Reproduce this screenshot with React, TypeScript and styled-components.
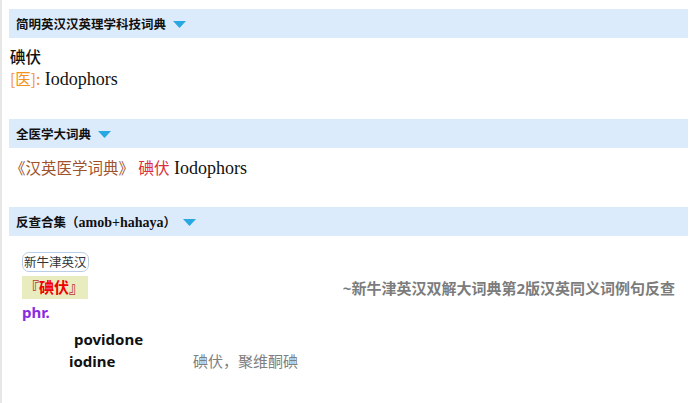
import React from 'react';
import styled, { createGlobalStyle } from 'styled-components';

const GlobalStyle = createGlobalStyle`
  html, body {
    margin: 0;
    padding: 0;
    background: #fff;
  }
  body {
    font-family: 'Liberation Serif', 'Noto Sans CJK SC', serif;
  }
`;

const Page = styled.div`
  min-height: 403px;
  box-sizing: border-box;
  border-left: 2px solid #e6e6e6;
  padding: 9px 2px 0 7px;
`;

const Section = styled.section<{ $gap: number }>`
  margin-bottom: ${p => p.$gap}px;
`;

const Header = styled.div`
  display: flex;
  align-items: center;
  gap: 7px;
  height: 29px;
  padding-left: 7px;
  background: #dcebfc;
  font-family: 'Liberation Serif', 'Noto Sans CJK SC', serif;
  font-size: 12.5px;
  font-weight: 700;
  color: #111;
`;

const Latin = styled.span`
  font-size: 14px;
`;

const Caret = () => (
  <svg width="13" height="8" viewBox="0 0 13 8" style={{ marginTop: 2 }}>
    <polygon points="0,0 13,0 6.5,7" fill="#27a8e0" />
  </svg>
);

const Body = styled.div<{ $top: number }>`
  padding: ${p => p.$top}px 0 0 1px;
`;

const Line = styled.div`
  height: 22px;
  line-height: 22px;
  font-size: 18px;
  color: #111;
  white-space: nowrap;
`;

const Headword = styled.span`
  font-family: 'Noto Sans CJK SC', sans-serif;
  font-size: 15.5px;
  font-weight: 500;
`;

const Cjk = styled.span<{ $color: string }>`
  font-family: 'Noto Sans CJK SC', sans-serif;
  font-size: 15.5px;
  color: ${p => p.$color};
`;

const Reverse = styled.div`
  padding: 14px 13px 0 13px;
  font-family: 'Noto Sans', 'Noto Sans CJK SC', sans-serif;
`;

const Pill = styled.span`
  display: inline-block;
  height: 20px;
  line-height: 19px;
  box-sizing: border-box;
  padding: 0 1px;
  border: 1px solid #b9cde6;
  border-radius: 7px;
  font-size: 12.5px;
  color: #333;
`;

const EntryRow = styled.div`
  display: flex;
  align-items: center;
  justify-content: space-between;
  margin-top: 4px;
`;

const Tag = styled.span`
  display: inline-block;
  height: 23px;
  line-height: 23px;
  padding: 0 4px 0 2px;
  background: #e9ecbf;
  font-size: 15px;
  font-weight: 700;
  color: #f00000;
`;

const Bracket = styled.span`
  color: #b8322e;
`;

const Source = styled.span`
  font-size: 15px;
  font-weight: 700;
  color: #7c7c7c;
`;

const Pos = styled.div`
  height: 22px;
  line-height: 22px;
  margin-top: 2px;
  font-size: 15px;
  font-weight: 700;
  color: #8a2be2;
`;

const Example = styled.div`
  display: flex;
  align-items: flex-end;
  margin-top: 5px;
  padding-left: 47px;
`;

const Phrase = styled.div`
  width: 124px;
  font-size: 15px;
  font-weight: 700;
  line-height: 22px;
  color: #111;
  text-indent: 5px;
`;

const Gloss = styled.div`
  font-size: 15px;
  line-height: 22px;
  color: #808080;
`;

export default function App() {
  return (
    <>
      <GlobalStyle />
      <Page>
        <Section $gap={30}>
          <Header>
            简明英汉汉英理学科技词典
            <Caret />
          </Header>
          <Body $top={7}>
            <Line><Headword>碘伏</Headword></Line>
            <Line>
              <Cjk $color="#f5921e">[医]:</Cjk> Iodophors
            </Line>
          </Body>
        </Section>

        <Section $gap={29}>
          <Header>
            全医学大词典
            <Caret />
          </Header>
          <Body $top={8}>
            <Line>
              <Cjk $color="#a0522d">《汉英医学词典》</Cjk> <Cjk $color="#dc2e3c">碘伏</Cjk> Iodophors
            </Line>
          </Body>
        </Section>

        <Section $gap={0}>
          <Header>
            <span>反查合集（<Latin>amob+hahaya</Latin>）</span>
            <Caret />
          </Header>
          <Reverse>
            <Pill>新牛津英汉</Pill>
            <EntryRow>
              <Tag><Bracket>『</Bracket>碘伏<Bracket>』</Bracket></Tag>
              <Source>~新牛津英汉双解大词典第2版汉英同义词例句反查</Source>
            </EntryRow>
            <Pos>phr.</Pos>
            <Example>
              <Phrase>povidone iodine</Phrase>
              <Gloss>碘伏，聚维酮碘</Gloss>
            </Example>
          </Reverse>
        </Section>
      </Page>
    </>
  );
}
